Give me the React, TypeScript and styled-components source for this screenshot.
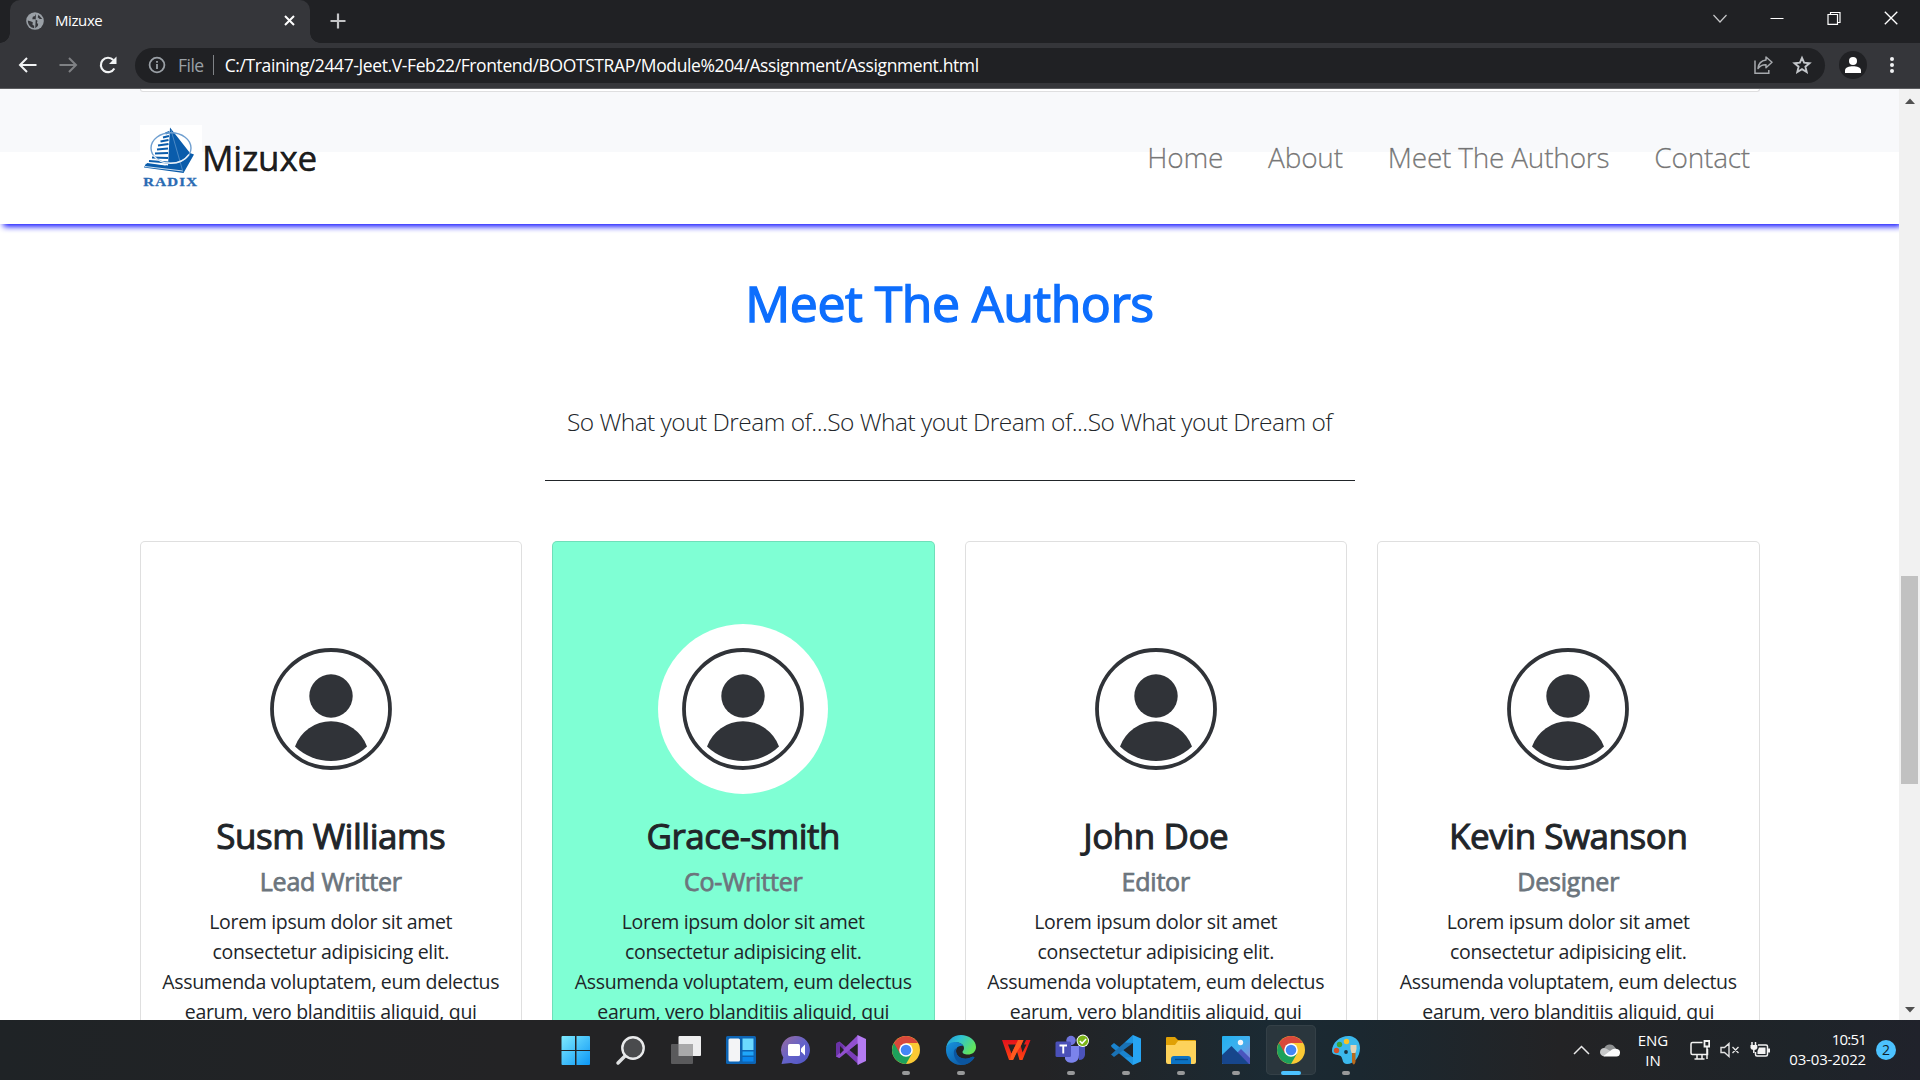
import React from 'react';
import styled, { createGlobalStyle } from 'styled-components';

const ui = `'Segoe UI', 'Open Sans', 'Noto Sans', sans-serif`;

const GlobalStyle = createGlobalStyle`
  *, *::before, *::after { box-sizing: border-box; }
  body { margin: 0; overflow: hidden; font-family: ${ui}; }
  h1, h3, h5, p { margin: 0; }
  svg { display: block; flex: none; }
`;

/* ---------- browser window ---------- */

const Screen = styled.div`
  display: flex;
  flex-direction: column;
  width: 1920px;
  height: 1080px;
  overflow: hidden;
  background: #fff;
`;

const TabStrip = styled.div`
  display: flex;
  flex: none;
  height: 43px;
  padding-left: 10px;
  background: #202124;
  color: #fff;
`;

const Tab = styled.div`
  position: relative;
  display: flex;
  align-items: center;
  width: 300px;
  padding: 0 15px 2px 16px;
  border-radius: 10px 10px 0 0;
  background: #35363a;
  &::before, &::after {
    content: '';
    position: absolute;
    bottom: 0;
    width: 10px;
    height: 10px;
  }
  &::before {
    left: -10px;
    background: radial-gradient(circle at 0 0, transparent 9.5px, #35363a 10px);
  }
  &::after {
    right: -10px;
    background: radial-gradient(circle at 100% 0, transparent 9.5px, #35363a 10px);
  }
`;

const TabTitle = styled.span`
  flex: 1;
  margin-left: 11px;
  padding-bottom: 2px;
  font-size: 15px;
  letter-spacing: -0.4px;
`;

const NewTab = styled.div`
  display: flex;
  align-items: center;
  padding: 0 0 1px 20px;
`;

const WindowControls = styled.div`
  display: flex;
  margin-left: auto;
  padding-right: 1px;
`;

const WindowButton = styled.div`
  display: flex;
  justify-content: center;
  width: 57px;
  padding-top: 11px;
`;

const Toolbar = styled.div`
  display: flex;
  flex: none;
  align-items: center;
  height: 46px;
  padding: 0 25px 1px 18px;
  border-bottom: 1px solid #5c5d60;
  background: #35363a;
`;

const NavButtons = styled.div`
  display: flex;
  gap: 20px;
  width: 117px;
`;

const AddressBar = styled.div`
  display: flex;
  flex: 1;
  align-items: center;
  height: 35px;
  padding: 0 13px;
  border-radius: 18px;
  background: #202124;
  font-size: 17.5px;
  line-height: 35px;
  white-space: nowrap;
`;

const Scheme = styled.span`
  margin-left: 12px;
  padding-right: 9px;
  color: #9aa0a6;
  letter-spacing: -0.5px;
`;

const Divider = styled.i`
  width: 1px;
  height: 20px;
  margin-right: 11px;
  background: #808387;
`;

const Url = styled.span`
  flex: 1;
  color: #fff;
  letter-spacing: -0.39px;
`;

const AddressActions = styled.div`
  display: flex;
  align-items: center;
  gap: 19px;
`;

const ProfileBadge = styled.div`
  display: flex;
  align-items: center;
  justify-content: center;
  width: 28px;
  height: 28px;
  margin: 0 22px 0 14px;
  border-radius: 50%;
  background: #202124;
`;

/* ---------- web page ---------- */

const Viewport = styled.div`
  display: flex;
  flex: none;
  height: 931px;
`;

const Page = styled.main`
  position: relative;
  width: 1899px;
  overflow: hidden;
  background: #fff;
  color: #212529;
`;

const PreviousSection = styled.section`
  height: 63px;
  padding: 0 139.5px;
  background: #f8f9fb;
`;

const PreviousCardEdge = styled.div`
  height: 3px;
  border: 1px solid #dfdfe0;
  border-top: 0;
  border-radius: 0 0 5px 5px;
  background: #fff;
`;

const Navbar = styled.nav`
  position: absolute;
  inset: 0 0 auto;
  display: flex;
  align-items: center;
  justify-content: space-between;
  height: 135px;
  padding: 0 149px 0 140px;
  box-shadow: 2.5px 2.5px 6.25px blue;
`;

const Brand = styled.div`
  display: flex;
  align-items: center;
  height: 62px;
  margin-bottom: 1px;
`;

const BrandName = styled.span`
  padding-top: 3px;
  font-size: 35px;
  line-height: 52px;
  letter-spacing: -0.2px;
  color: rgba(0, 0, 0, 0.9);
  -webkit-text-stroke: 0.5px rgba(0, 0, 0, 0.9);
`;

const NavLinks = styled.div`
  display: flex;
  gap: 45px;
  padding-top: 1px;
  font-size: 28px;
  font-weight: 300;
  line-height: 42px;
  letter-spacing: -0.22px;
  color: rgba(0, 0, 0, 0.5);
  -webkit-text-stroke: 0.45px rgba(0, 0, 0, 0.35);
`;

const AuthorsSection = styled.section`
  display: flex;
  flex-direction: column;
  align-items: center;
  padding-top: 121px;
`;

const SectionTitle = styled.h1`
  font-size: 50px;
  font-weight: 400;
  line-height: 60px;
  letter-spacing: -0.5px;
  color: #0d6efd;
  -webkit-text-stroke: 1.4px #0d6efd;
`;

const Lead = styled.p`
  width: 810px;
  height: 148px;
  padding-top: 70px;
  border-bottom: 1px solid #212529;
  text-align: center;
  font-size: 24.5px;
  font-weight: 300;
  line-height: 38px;
  letter-spacing: -0.53px;
  white-space: nowrap;
`;

const CardRow = styled.div`
  display: grid;
  grid-template-columns: repeat(4, 382.5px);
  gap: 30px;
  margin-top: 60px;
`;

const Card = styled.article<{ $highlight?: boolean }>`
  display: flex;
  flex-direction: column;
  align-items: center;
  height: 700px;
  padding: 82px 20px 0;
  border: 1px solid rgba(0, 0, 0, 0.125);
  border-radius: 5px;
  background: ${p => (p.$highlight ? '#7fffd4' : '#fff')};
  text-align: center;
`;

const Portrait = styled.div`
  display: flex;
  width: 170px;
  height: 170px;
  margin-bottom: 21px;
  border-radius: 50%;
  background: #fff;
`;

const AuthorName = styled.h3`
  margin-bottom: 9px;
  font-size: 35px;
  font-weight: 400;
  line-height: 42px;
  letter-spacing: -0.47px;
  -webkit-text-stroke: 1px #212529;
`;

const Role = styled.h5`
  margin-bottom: 11px;
  font-size: 25px;
  font-weight: 400;
  line-height: 30px;
  letter-spacing: -0.2px;
  color: #6c757d;
  -webkit-text-stroke: 0.75px #6c757d;
`;

const Bio = styled.p`
  font-size: 19.5px;
  line-height: 30px;
  letter-spacing: -0.33px;
`;

const ScrollBar = styled.div`
  display: flex;
  flex-direction: column;
  align-items: center;
  width: 21px;
  padding: 9px 0 7px;
  background: #f1f1f1;
`;

const ScrollThumb = styled.div`
  width: 17px;
  height: 208px;
  margin: 472px 0 auto;
  background: #c1c1c1;
`;

/* ---------- taskbar ---------- */

const Taskbar = styled.div`
  display: flex;
  flex: none;
  height: 60px;
  padding-left: 548px;
  background: linear-gradient(90deg, #1f2326 0, #232325 500px, #232325 1040px, #1b2a33 1270px, #1b2830 1360px, #232325 1560px, #1e2429 1800px, #20222b 1920px);
  color: #fff;
`;

const AppSlot = styled.div`
  display: flex;
  justify-content: center;
  width: 55.05px;
  padding-top: 5px;
`;

const AppButton = styled.div<{ $active?: boolean }>`
  display: flex;
  flex-direction: column;
  align-items: center;
  justify-content: space-between;
  width: 50px;
  height: 50px;
  padding-top: 9px;
  border-radius: 5px;
  background: ${p => (p.$active ? '#2a363d' : 'transparent')};
  box-shadow: ${p => (p.$active ? 'inset 0 0 0 1px #344047' : 'none')};
`;

const Indicator = styled.i<{ $state: 'none' | 'open' | 'active' }>`
  width: ${p => (p.$state === 'active' ? 20 : 8)}px;
  height: 4px;
  border-radius: 2px;
  background: ${p => (p.$state === 'none' ? 'transparent' : p.$state === 'active' ? '#4cc2ff' : '#98999a')};
`;

const Tray = styled.div`
  display: flex;
  align-items: center;
  margin-left: auto;
  padding-right: 24px;
  font-size: 15px;
  line-height: 20px;
`;

const Language = styled.div`
  width: 40px;
  margin: 0 17px 0 13px;
  text-align: center;
`;

const StatusIcons = styled.div`
  display: flex;
  align-items: center;
  gap: 10px;
`;

const Clock = styled.div`
  width: 90px;
  margin: 0 10px 0 6px;
  padding-bottom: 3px;
  text-align: right;
  letter-spacing: -0.15px;
`;

const Hours = styled.span`
  letter-spacing: -0.8px;
`;

const Count = styled.div`
  width: 20px;
  height: 20px;
  border-radius: 50%;
  background: #4cc2ff;
  color: #10202a;
  text-align: center;
  font-size: 14px;
`;

/* ---------- drawings ---------- */

const Globe = () => (
  <svg width="18" height="18" viewBox="0 0 18 18">
    <circle cx="9" cy="9" r="8.8" fill="#9aa0a6" />
    <path d="M10 1.800 9 4 6.800 4.800 6.300 7.300H9.200l2.300 1.400-.6 2.500 1.300.6-.4 2.200-2.600 2.200M1.800 8.600l2.700.7 2.300 1-.3 2.400 1.700 1v2.500C4.600 15.900 1.800 13 1.800 8.600ZM12.500 2.700l-.8 2.500 2 1.800 2.500.1" fill="#35363a" />
  </svg>
);

const CloseTab = () => (
  <svg width="11" height="11" viewBox="0 0 11 11" stroke="#fff" strokeWidth="2">
    <path d="m1 1 9 9M10 1l-9 9" />
  </svg>
);

const Plus = () => (
  <svg width="16" height="16" viewBox="0 0 16 16" stroke="#c3c4c6" strokeWidth="2.2">
    <path d="M8 .5v15M.5 8h15" />
  </svg>
);

const Arrow = ({ color, flip }: { color: string; flip?: boolean }) => (
  <svg width="20" height="20" viewBox="0 0 20 20" fill="none" stroke={color} strokeWidth="2">
    <path d={flip ? 'M1.5 10h16M11 3l7 7-7 7' : 'M18.500 10H2.500M9 3l-7 7 7 7'} />
  </svg>
);

const Reload = () => (
  <svg width="20" height="20" viewBox="0 0 20 20">
    <path d="M16.300 13.500A7.200 7.200 0 1 1 15.300 5" fill="none" stroke="#f1f3f4" strokeWidth="2.200" />
    <path d="M18.500 1.500v7.500H11Z" fill="#f1f3f4" />
  </svg>
);

const Info = () => (
  <svg width="18" height="18" viewBox="0 0 18 18" fill="none" stroke="#9aa0a6" strokeWidth="1.8">
    <circle cx="9" cy="9" r="7.400" />
    <path d="M9 8v5M9 5v1.800" />
  </svg>
);

const Share = () => (
  <svg width="20" height="20" viewBox="0 0 20 20" fill="none" stroke="#a6a9ad" strokeWidth="1.500">
    <path d="M2 5.500v12.700h13.800V15" />
    <path d="M13 2l6 5.300-6 5.400V9.800c-3.600-.2-5.800 1-8 3.700.4-4.600 3.300-7.900 8-8.500V2Z" strokeLinejoin="round" />
  </svg>
);

const Star = () => (
  <svg width="20" height="20" viewBox="0 0 20 20" fill="none" stroke="#c3c6ca" strokeWidth="1.900">
    <path d="m10 2.800 2.100 4.900 5.400.5-4.100 3.500 1.300 5.300L10 14.200l-4.700 2.800 1.300-5.300-4.100-3.500 5.400-.5Z" />
  </svg>
);

const Profile = () => (
  <svg width="16" height="16" viewBox="0 0 16 16" fill="#fff">
    <circle cx="8" cy="4" r="4" />
    <path d="M0 16v-2.500C0 10.500 4 9.300 8 9.300s8 1.200 8 4.200V16Z" />
  </svg>
);

const Dots = () => (
  <svg width="6" height="18" viewBox="0 0 6 18" fill="#f1f3f4">
    <circle cx="3" cy="3" r="2" /><circle cx="3" cy="9" r="2" /><circle cx="3" cy="15" r="2" />
  </svg>
);

const RadixLogo = () => (
  <svg width="62" height="62" viewBox="0 0 62 62">
    <rect width="62" height="62" fill="#fff" />
    <path d="M30 2.500 50 28l4 1.500L43.500 48 4 42.500l2-4 22 2Z" fill="#0a5cab" />
    <path d="m29 8-3.500 33L4 38 26 5Z" fill="#fff" />
    <g stroke="#0a5cab" strokeWidth="2.100">
      <path d="m25.500 8.500 4-1.500M23 12.500l6-1.500M20.500 16.500l8-1.500M18 20.500l10.500-1.500M17 24.500l11-1M15 28.500l13-.5M12 32.500l16 .5M9 36l19 1.500M7 39l21 3" />
    </g>
    <path d="m5 41.500 38 4.500" stroke="#fff" strokeWidth=".8" />
    <path d="m31 5 12 42" stroke="#5c93c9" strokeWidth=".8" />
    <ellipse cx="31" cy="23" rx="20" ry="15.300" fill="none" stroke="#6f9fd0" strokeWidth="1.400" />
    <path d="M13.500 30.500c7 10 27 11 35.500-1" fill="none" stroke="#e8f0f8" strokeWidth="1.300" />
    <text x="3.300" y="60.500" textLength="55" lengthAdjust="spacingAndGlyphs" letterSpacing="1" fontFamily="'Liberation Serif', serif" fontWeight="700" fontSize="12.500" fill="#2a6bb3" stroke="#2a6bb3" strokeWidth=".3">RADIX</text>
  </svg>
);

const Avatar = () => (
  <svg width="170" height="170" viewBox="0 0 170 170" fill="#303338">
    <circle cx="85" cy="85" r="59" fill="none" stroke="#303338" strokeWidth="3.800" />
    <circle cx="85" cy="72" r="21.700" />
    <path d="M49 122.500a38.300 38.300 0 0 1 72 0a52 52 0 0 1-72 0Z" />
  </svg>
);

const Triangle = ({ down }: { down?: boolean }) => (
  <svg width="10" height="6" viewBox="0 0 10 6" fill="#505050">
    <path d={down ? 'M0 0h10L5 5.500Z' : 'M0 6h10L5 .5Z'} />
  </svg>
);

const AppSvg = ({ children }: { children: React.ReactNode }) => (
  <svg width="36" height="32" viewBox="0 0 36 32">{children}</svg>
);

const Start = () => (
  <AppSvg>
    <linearGradient id="win" x1="0" y1="0" x2="1" y2="1" gradientUnits="userSpaceOnUse" gradientTransform="translate(4 2) scale(29)">
      <stop stopColor="#7deaff" /><stop offset="1" stopColor="#0a95f5" />
    </linearGradient>
    <path d="M4.500 2H17v14H3.500V3q0-1 1-1ZM18.500 2H31q1 0 1 1v13H18.500ZM3.500 17H17v14H4.500q-1 0-1-1ZM18.500 17H32v13q0 1-1 1H18.500Z" fill="url(#win)" />
  </AppSvg>
);

const Search = () => (
  <AppSvg>
    <path d="m13 21-8 8" stroke="#dfe1e2" strokeWidth="3.500" strokeLinecap="round" />
    <circle cx="20" cy="14" r="10.700" fill="#4a4b4d" stroke="#e9eaeb" strokeWidth="2.400" />
  </AppSvg>
);

const TaskView = () => (
  <AppSvg>
    <rect x="10.500" y="2" width="22.500" height="20" rx="1" fill="#eeeeef" />
    <rect x="3" y="10" width="22" height="20" rx="1" fill="#5a5a5c" />
    <path d="M10.500 10H25v12H10.500Z" fill="#a9a9aa" />
  </AppSvg>
);

const Widgets = () => (
  <AppSvg>
    <rect x="3" y="2" width="30" height="28" rx="1.500" fill="#0d64b4" />
    <rect x="5.500" y="4.500" width="11.500" height="23" rx="1.500" fill="#f3f4f6" />
    <path d="M19.500 4.500h11v11.500h-11Z" fill="#6cd9ff" />
    <path d="M19.500 17.500h11v4h-11Z" fill="#20a6fa" />
    <path d="M19.500 23h11v4.500h-11Z" fill="#0a86ee" />
  </AppSvg>
);

const Chat = () => (
  <AppSvg>
    <linearGradient id="chat" x1="0" y1="0" x2="1" y2="1">
      <stop stopColor="#9a6a9c" /><stop offset=".5" stopColor="#6563c9" /><stop offset="1" stopColor="#4f55c5" />
    </linearGradient>
    <path d="M18 2a14 14 0 1 1-5 27.100L3.500 30l1.800-6.500A14 14 0 0 1 18 2Z" fill="url(#chat)" />
    <rect x="10" y="10" width="12" height="12" rx="1.500" fill="#fff" />
    <path d="m23 14.500 4-4v11l-4-4Z" fill="#fff" />
  </AppSvg>
);

const VisualStudio = () => (
  <AppSvg>
    <path d="m3.500 9 3-1.500L26 24v7L5 11.500Z" fill="#7a3db8" />
    <path d="M3 9.500v13l3 1.500 4-4V12L6 8Z" fill="#6a32a6" />
    <path d="M3 22.500 25 1l1.500 7L6.500 24Z" fill="#9150cf" />
    <path d="m24.500 1 8.500 4v22l-8.500 4Z" fill="#b47bf2" />
    <path d="M7 12v8l4-4ZM24.500 10v12L17 16Z" fill="#232325" />
  </AppSvg>
);

const Chrome = () => (
  <AppSvg>
    <circle cx="18" cy="16" r="14" fill="#fbc934" />
    <path d="M18 16 5.900 9A14 14 0 0 0 18 30l6-10.500Z" fill="#1da15c" />
    <path d="M5.900 9A14 14 0 0 1 30.100 9H18l-6 10.500Z" fill="#d9483b" />
    <circle cx="18" cy="16" r="6.800" fill="#fff" />
    <circle cx="18" cy="16" r="5.300" fill="#4386f5" />
  </AppSvg>
);

const Edge = () => (
  <AppSvg>
    <linearGradient id="edgeTop" x1="0" y1="0" x2="1" y2=".5">
      <stop stopColor="#2191d9" /><stop offset=".45" stopColor="#2fc3d3" /><stop offset="1" stopColor="#62e45c" />
    </linearGradient>
    <linearGradient id="edgeBottom" x1="0" y1="0" x2="1" y2="1">
      <stop stopColor="#1694e0" /><stop offset="1" stopColor="#0c4a94" />
    </linearGradient>
    <path d="M3 16C3 7 10 1 18 1s15 5 15 12c0 5-4 7.500-8 7.500s-5.500-1.500-5.500-2.500 1.500-1.500 1.500-4c0-3-3-5.500-7.500-5.500S3 11 3 16Z" fill="url(#edgeTop)" />
    <path d="M3 16c0-5 4-8 9-8 4 0 7 1.500 8.500 4-6-1-8.500 3-7 7.500 1.500 4 7 6.500 13 4.500 2-.7 4-2 5-.5C29 28 24 31 18 31 9 31 3 24 3 16Z" fill="url(#edgeBottom)" />
    <path d="M11 17c-1 5 2 11 8 13.800 5 0 9.500-2.800 12.500-7.300-1-1.500-3-.2-5 .5-6 2-11.500-.5-13-4.500-.7-2-.6-4 .3-5.500-1.500.5-2.500 1.500-2.800 3Z" fill="#0b559f" />
  </AppSvg>
);

const Wps = () => (
  <AppSvg>
    <linearGradient id="wps" x1="0" y1="0" x2="0" y2="1">
      <stop stopColor="#e3121c" /><stop offset="1" stopColor="#ff4512" />
    </linearGradient>
    <path d="M4 6h16l-1.500 4.500H10l3.500 9L20 6h5.500l-2.700 6 1.700 6.500L28.500 10.500H26L28 6h4.500L24.500 26h-3L19 17.500 15 26h-4Z" fill="url(#wps)" />
    <path d="M20 6h5.500l-2.700 6-3.600 5.500L15 26h-3l1.500-6.500Z" fill="#ff5a1f" />
  </AppSvg>
);

const Teams = () => (
  <AppSvg>
    <circle cx="18" cy="6.500" r="4.700" fill="#6f74dc" />
    <path d="M26 12h6v9a6 6 0 0 1-6 5Z" fill="#4b53bc" />
    <path d="M12 12h14v9a7.500 7.500 0 0 1-14 4Z" fill="#7b83eb" />
    <rect x="2.500" y="7.500" width="15.500" height="15.500" rx="1.500" fill="#4a50b8" />
    <path d="M6.500 11.500H14M10.250 11.500v8" stroke="#fff" strokeWidth="1.900" />
    <circle cx="29.800" cy="6.800" r="6.200" fill="#fff" />
    <circle cx="29.800" cy="6.800" r="5.300" fill="#7cb518" />
    <path d="m26.800 7 2.300 2.300 4-4.300" fill="none" stroke="#fff" strokeWidth="1.500" />
  </AppSvg>
);

const VsCode = () => (
  <AppSvg>
    <path d="M3 11.500 6 9l19 14.500V31L3.500 13Z" fill="#1a84cf" />
    <path d="M3 20.500 25 1v8L6 23Z" fill="#1a72b5" />
    <path d="m25 1 8 3.500v23L25 31Z" fill="#27a5f3" />
    <path d="M25 1 17 8.500l8 .5ZM25 31l-8-7.500 8-.5Z" fill="#1f95e0" />
  </AppSvg>
);

const Folder = () => (
  <AppSvg>
    <path d="M3 4q0-1 1-1h8l3 3h17q1 0 1 1v5H3Z" fill="#e0a106" />
    <path d="M3 11h9l3-4h18v21q0 2-2 2H5q-2 0-2-2Z" fill="#fdd25b" />
    <path d="M8 30v-5q0-3 3-3h14q3 0 3 3v5Z" fill="#0c73c4" />
    <path d="M12 25.500h13" stroke="#064a86" strokeWidth="1.300" />
  </AppSvg>
);

const Photos = () => (
  <AppSvg>
    <linearGradient id="sky" x1="0" y1="0" x2="1" y2="1">
      <stop stopColor="#22b0ef" /><stop offset=".5" stopColor="#3fb0ef" /><stop offset="1" stopColor="#9a7fd0" />
    </linearGradient>
    <rect x="4" y="2" width="28" height="28" rx="1" fill="url(#sky)" />
    <path d="m19 19 4-4 9 9v5q0 1-1 1h-8Z" fill="#4a55bd" />
    <path d="M4 21 13.500 12 31 30H5q-1 0-1-1Z" fill="#17468c" />
    <circle cx="22.500" cy="8.500" r="2.700" fill="#f5f7fa" />
  </AppSvg>
);

const Paint = () => (
  <AppSvg>
    <path d="M22 2c6 1 10 5.500 10 12 0 9-6 16-13 16-4.500 0-4-4-5.500-7S4 22 4 17C4 8 13 1 22 2Z" fill="#3bb8ec" />
    <circle cx="18.500" cy="7.500" r="2.700" fill="#f7c325" />
    <circle cx="11.500" cy="10.500" r="2.700" fill="#3ba338" />
    <circle cx="8.500" cy="16.500" r="2.700" fill="#d4502a" />
    <circle cx="18" cy="18" r="1.900" fill="#1b3340" />
    <path d="M24 18h3.500v10q-1.700 5-3.500 0Z" fill="#b86a1d" />
    <path d="M22.500 11h6v4l-1 4h-4l-1-4Z" fill="#e3d3b5" />
  </AppSvg>
);

const TrayChevron = () => (
  <svg width="17" height="10" viewBox="0 0 17 10" fill="none" stroke="#e8e8e8" strokeWidth="1.500">
    <path d="m1 9 7.500-7.500L16 9" />
  </svg>
);

const Cloud = () => (
  <svg width="20" height="14" viewBox="0 0 20 14">
    <path d="M4 6a6 6 0 0 1 11-1.500L19 8 9 10 1 9Z" fill="#8f9192" />
    <path d="M0 9a4 4 0 0 1 6-3.500L14 10l-9 3A4 4 0 0 1 0 9Z" fill="#c7c8c9" />
    <path d="M3.500 13 12 6.500A5 5 0 0 1 16.500 6 3.700 3.700 0 0 1 16 13.500H4Z" fill="#fbfbfb" />
  </svg>
);

const Monitor = () => (
  <svg width="20" height="20" viewBox="0 0 20 20" fill="none" stroke="#f3f3f3" strokeWidth="1.500">
    <path d="M12.500 2.500H2.500Q1 2.500 1 4v9q0 1.500 1.500 1.500h15V9M7 15v4M12 15v4M4.500 19h10" />
    <path d="M14.500 1h4.700v5.500h-4.700Z" strokeWidth="1.800" />
    <path d="M17 7v12" />
  </svg>
);

const Muted = () => (
  <svg width="20" height="16" viewBox="0 0 20 16" fill="none" stroke="#e3e3e3" strokeWidth="1.400">
    <path d="M1 5.500h3.500L9 1.500v13l-4.500-4H1ZM12.500 5l6 6M18.500 5l-6 6" />
  </svg>
);

const Battery = () => (
  <svg width="20" height="18" viewBox="0 0 20 18" fill="none" stroke="#f3f3f3" strokeWidth="1.500">
    <path d="M8 4h8q1.500 0 1.500 1.500v8q0 1.500-1.500 1.500H7q-1.500 0-1.500-1.500V11" />
    <path d="M9 6.500h6.500v6.500H7.500V10Z" fill="#f3f3f3" stroke="none" />
    <path d="M19 7.500v4" strokeWidth="2" />
    <path d="M2 1v3M5.500 1v3M3.800 8v4" />
    <path d="M.5 4h6.800v3Q7 9 4 9T.5 7Z" fill="#f3f3f3" stroke="none" />
  </svg>
);

/* ---------- data ---------- */

const authors = [
  { name: 'Susm Williams', role: 'Lead Writter' },
  { name: 'Grace-smith', role: 'Co-Writter', highlight: true },
  { name: 'John Doe', role: 'Editor' },
  { name: 'Kevin Swanson', role: 'Designer' },
];

const bio = 'Lorem ipsum dolor sit amet consectetur adipisicing elit. Assumenda voluptatem, eum delectus earum, vero blanditiis aliquid, qui';

const apps: { Icon: () => React.ReactElement; state: 'none' | 'open' | 'active' }[] = [
  { Icon: Start, state: 'none' },
  { Icon: Search, state: 'none' },
  { Icon: TaskView, state: 'none' },
  { Icon: Widgets, state: 'none' },
  { Icon: Chat, state: 'none' },
  { Icon: VisualStudio, state: 'none' },
  { Icon: Chrome, state: 'open' },
  { Icon: Edge, state: 'open' },
  { Icon: Wps, state: 'none' },
  { Icon: Teams, state: 'open' },
  { Icon: VsCode, state: 'open' },
  { Icon: Folder, state: 'open' },
  { Icon: Photos, state: 'open' },
  { Icon: Chrome, state: 'active' },
  { Icon: Paint, state: 'open' },
];

export default function App() {
  return (
    <Screen>
      <GlobalStyle />
      <TabStrip>
        <Tab>
          <Globe />
          <TabTitle>Mizuxe</TabTitle>
          <CloseTab />
        </Tab>
        <NewTab><Plus /></NewTab>
        <WindowControls>
          <WindowButton>
            <svg width="14" height="14" viewBox="0 0 14 14" fill="none" stroke="#c6c7c9" strokeWidth="1.200"><path d="m.5 4 6.500 7 6.500-7" /></svg>
          </WindowButton>
          <WindowButton>
            <svg width="14" height="14" viewBox="0 0 14 14" stroke="#fff"><path d="M.5 7.500h13" /></svg>
          </WindowButton>
          <WindowButton>
            <svg width="14" height="14" viewBox="0 0 14 14" fill="none" stroke="#fff" strokeWidth="1.200"><path d="M1 3.500h9.500V13.400H1ZM3.500 3.500V1.500H13v10h-2.500" /></svg>
          </WindowButton>
          <WindowButton>
            <svg width="14" height="14" viewBox="0 0 14 14" stroke="#fff" strokeWidth="1.300"><path d="m.8.8 12.500 12.500M13.300.8.8 13.300" /></svg>
          </WindowButton>
        </WindowControls>
      </TabStrip>

      <Toolbar>
        <NavButtons>
          <Arrow color="#f1f3f4" />
          <Arrow color="#7f8184" flip />
          <Reload />
        </NavButtons>
        <AddressBar>
          <Info />
          <Scheme>File</Scheme>
          <Divider />
          <Url>C:/Training/2447-Jeet.V-Feb22/Frontend/BOOTSTRAP/Module%204/Assignment/Assignment.html</Url>
          <AddressActions><Share /><Star /></AddressActions>
        </AddressBar>
        <ProfileBadge><Profile /></ProfileBadge>
        <Dots />
      </Toolbar>

      <Viewport>
        <Page>
          <PreviousSection><PreviousCardEdge /></PreviousSection>
          <Navbar>
            <Brand><RadixLogo /><BrandName>Mizuxe</BrandName></Brand>
            <NavLinks>
              <span>Home</span>
              <span>About</span>
              <span>Meet The Authors</span>
              <span>Contact</span>
            </NavLinks>
          </Navbar>
          <AuthorsSection>
            <SectionTitle>Meet The Authors</SectionTitle>
            <Lead>So What yout Dream of...So What yout Dream of...So What yout Dream of</Lead>
            <CardRow>
              {authors.map(a => (
                <Card key={a.name} $highlight={a.highlight}>
                  <Portrait><Avatar /></Portrait>
                  <AuthorName>{a.name}</AuthorName>
                  <Role>{a.role}</Role>
                  <Bio>{bio}</Bio>
                </Card>
              ))}
            </CardRow>
          </AuthorsSection>
        </Page>
        <ScrollBar>
          <Triangle />
          <ScrollThumb />
          <Triangle down />
        </ScrollBar>
      </Viewport>

      <Taskbar>
        {apps.map(({ Icon, state }, i) => (
          <AppSlot key={i}>
            <AppButton $active={state === 'active'}>
              <Icon />
              <Indicator $state={state} />
            </AppButton>
          </AppSlot>
        ))}
        <Tray>
          <StatusIcons><TrayChevron /><Cloud /></StatusIcons>
          <Language>ENG<br />IN</Language>
          <StatusIcons><Monitor /><Muted /><Battery /></StatusIcons>
          <Clock><Hours>10:51</Hours><br />03-03-2022</Clock>
          <Count>2</Count>
        </Tray>
      </Taskbar>
    </Screen>
  );
}
